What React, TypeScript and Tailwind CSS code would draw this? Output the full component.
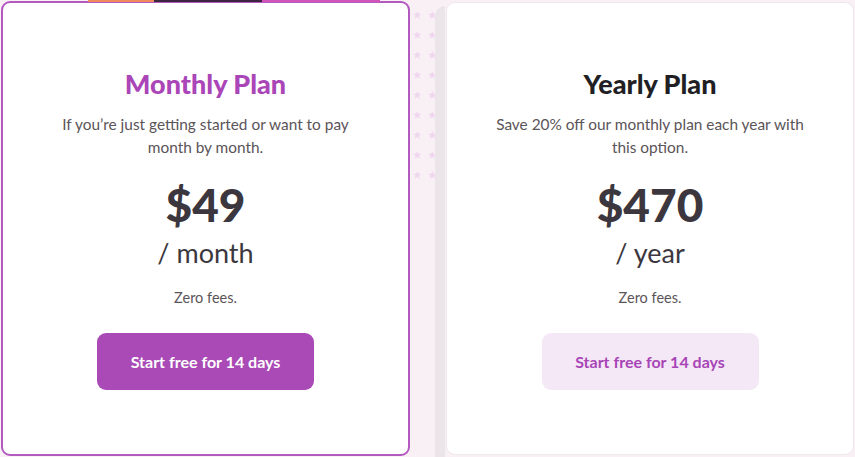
import React from "react";

const font = { fontFamily: "Lato, 'Noto Sans', sans-serif" };

function Star() {
  return (
    <svg width="10" height="10" viewBox="0 0 10 10" className="text-[#efd5ed]">
      <path
        d="M5 0.2 L6.3 3.4 L9.8 3.6 L7 5.8 L8 9.4 L5 7.3 L2 9.4 L3 5.8 L0.2 3.6 L3.7 3.4 Z"
        fill="currentColor"
      />
    </svg>
  );
}

type PlanProps = {
  title: string;
  titleClass: string;
  desc: [string, string];
  price: string;
  period: string;
  primary?: boolean;
};

function PlanBody({ title, titleClass, desc, price, period, primary }: PlanProps) {
  return (
    <div className="flex flex-col items-center pt-[64px]">
      <h2 className={`text-[27px] leading-[34px] font-black ${titleClass}`} style={font}>
        {title}
      </h2>
      <p className="mt-[12px] text-center text-[15.4px] leading-[23px] text-[#5b5459]" style={font}>
        {desc[0]}
        <br />
        {desc[1]}
      </p>
      <div className="mt-[18px] text-[46px] leading-[56px] font-black text-[#3c373e]" style={font}>
        {price}
      </div>
      <div className="mt-[2px] text-[27px] leading-[36px] text-[#3c373e]" style={font}>
        {period}
      </div>
      <div className="mt-[17px] text-[14.5px] leading-[20px] text-[#5b5459]" style={font}>
        Zero fees.
      </div>
      <button
        className={`mt-[25px] h-[57px] w-[217px] rounded-[9px] text-[16px] font-bold ${
          primary ? "bg-[#a94ab6] text-white" : "bg-[#f5e8f6] text-[#a845b6]"
        }`}
        style={font}
      >
        Start free for 14 days
      </button>
    </div>
  );
}

export default function App() {
  return (
    <div className="relative w-[855px] h-[457px] overflow-hidden bg-[#f8f0f5] flex">
      {/* coloured band peeking out above the first card */}
      <div className="absolute left-[88px] top-0 h-[2px] w-[292px] flex">
        <div className="w-[66px] bg-[#f08a5d]" />
        <div className="w-[6px] bg-[#3b2a3c]" />
        <div className="w-[102px] bg-[#3d2440]" />
        <div className="flex-1 bg-[#d254b8]" />
      </div>

      <div className="ml-[1px] mt-[1px] w-[409px] h-[455px] rounded-[9px] border-2 border-[#b35ac1] bg-white">
        <PlanBody
          title="Monthly Plan"
          titleClass="text-[#aa46b7]"
          desc={["If you’re just getting started or want to pay", "month by month."]}
          price="$49"
          period="/ month"
          primary
        />
      </div>

      {/* decorative gutter */}
      <div className="w-[26px] flex flex-col gap-[10px] pt-[10px] pl-[3px]">
        {Array.from({ length: 9 }).map((_, i) => (
          <div key={i} className="flex gap-[6px]">
            <Star />
            <Star />
          </div>
        ))}
      </div>
      <div className="w-[10px] mt-[6px] -ml-[1px] mr-[1px] rounded-tl-[10px] bg-[#ebe4e9]" />

      <div className="mt-[2px] w-[408px] h-[453px] rounded-[9px] border border-[#efe7ec] bg-white">
        <PlanBody
          title="Yearly Plan"
          titleClass="text-[#221f24]"
          desc={["Save 20% off our monthly plan each year with", "this option."]}
          price="$470"
          period="/ year"
        />
      </div>
    </div>
  );
}
